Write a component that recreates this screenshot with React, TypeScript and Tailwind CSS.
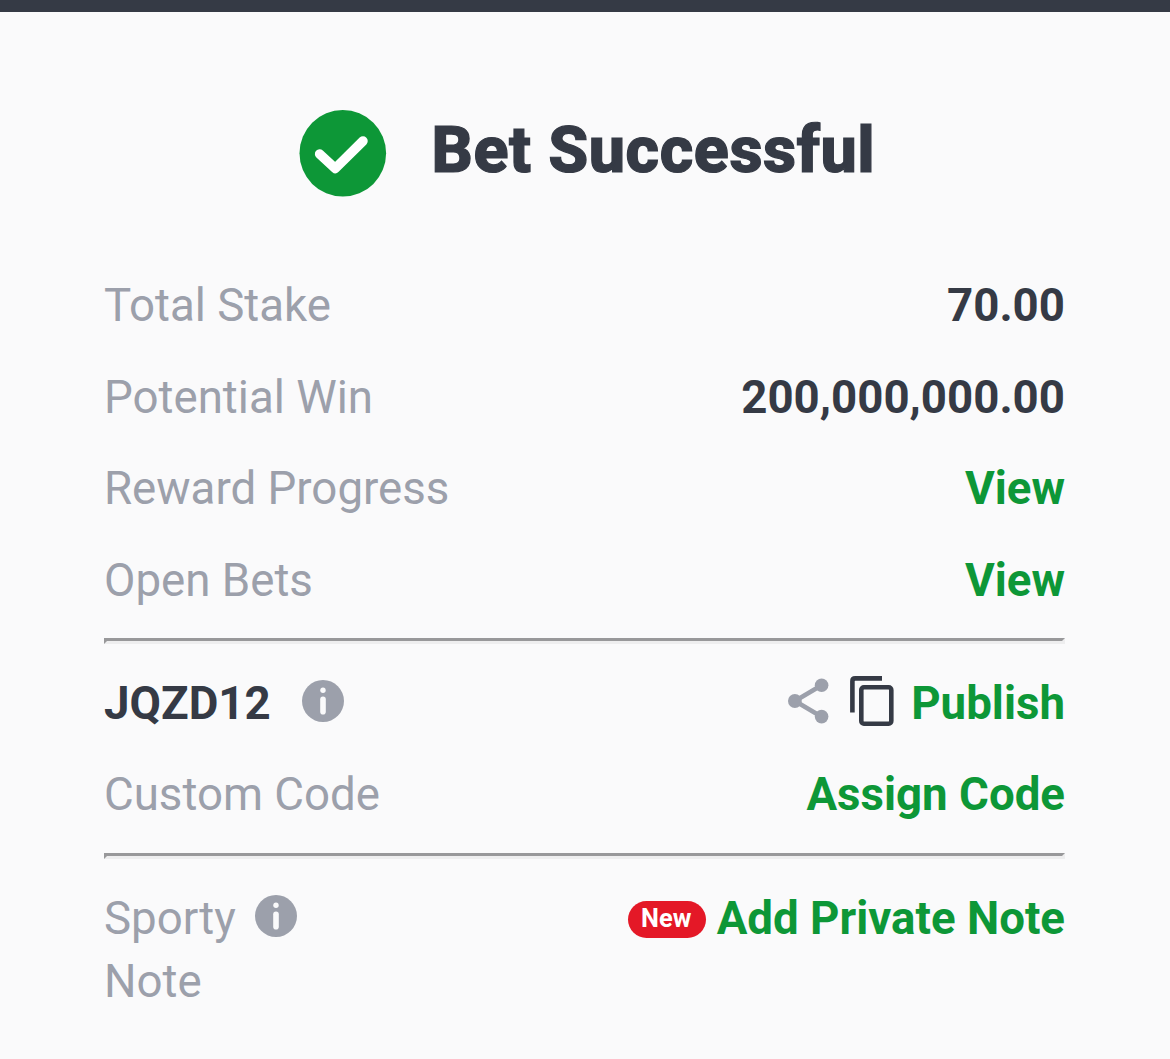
import React from "react";

function Info() {
  return (
    <svg width="42" height="42" viewBox="0 0 42 42" className="mb-[4px] shrink-0">
      <circle cx="21" cy="21" r="21" fill="#9ca0ab" />
      <circle cx="21" cy="10.3" r="2.7" fill="#fafafb" />
      <rect x="18.2" y="16.5" width="5.6" height="18" rx="2.8" fill="#fafafb" />
    </svg>
  );
}

function Share() {
  return (
    <svg width="42" height="46" viewBox="0 0 42 46" className="shrink-0">
      <path d="M34 7L7 23L34 39" fill="none" stroke="#9ca0ab" strokeWidth="4.6" />
      <circle cx="33.6" cy="7.2" r="6.8" fill="#9ca0ab" />
      <circle cx="6.9" cy="23" r="6.9" fill="#9ca0ab" />
      <circle cx="33.6" cy="38.6" r="6.8" fill="#9ca0ab" />
    </svg>
  );
}

function Copy() {
  return (
    <svg width="44" height="51" viewBox="0 0 44 51" className="shrink-0" fill="none" stroke="#353a45" strokeWidth="4.6">
      <path d="M2.4 36.5V5.2Q2.4 2.4 5.2 2.4H32" />
      <rect x="11.3" y="11.3" width="30" height="36.4" rx="2.6" />
    </svg>
  );
}

function Row({ label, children }: { label: string; children: React.ReactNode }) {
  return (
    <div className="flex h-[91.5px] items-center justify-between pt-[1.5px]">
      <span className="text-[#9ca0ab]">{label}</span>
      {children}
    </div>
  );
}

const green = "font-bold text-[#0d9737]";
const dark = "font-bold text-[#353a45]";

function Divider() {
  return <div className="my-[13px] h-[6px] border-[3px] border-t-[#98989a] border-r-[#eeeeef] border-b-[#eeeeef] border-l-[#98989a]" />;
}

export default function App() {
  return (
    <main className="h-[1059px] w-[1170px] overflow-hidden border-t-[12px] border-[#353a45] bg-[#fafafb] pr-[105px] pl-[104px] font-['Roboto',sans-serif] text-[45.65px] leading-[65px]">
      <header className="flex h-[247px] pt-[98px] pl-[195px]">
        <svg width="88" height="88" viewBox="0 0 88 88" className="shrink-0">
          <circle cx="43.8" cy="43.3" r="43.3" fill="#0d9737" />
          <path d="M20.6 44L36.3 58.4L64 31" fill="none" stroke="#fff" strokeWidth="9.5" strokeLinecap="round" strokeLinejoin="round" />
        </svg>
        <h1 className="ml-[44.5px] h-[80px] text-[64.5px] leading-[80px] font-extrabold tracking-[0.55px] whitespace-nowrap text-[#353a45] [-webkit-text-stroke:1.2px_#353a45]">Bet Successful</h1>
      </header>
      <Row label="Total Stake"><span className={dark}>70.00</span></Row>
      <Row label="Potential Win"><span className={dark}>200,000,000.00</span></Row>
      <Row label="Reward Progress"><span className={green}>View</span></Row>
      <Row label="Open Bets"><span className={green}>View</span></Row>
      <Divider />
      <div className="flex h-[91px] items-center justify-between pt-[2px]">
        <div className="flex items-center gap-[31px]"><span className={dark}>JQZD12</span><div className="pb-[2px]"><Info /></div></div>
        <div className="flex items-center">
          <div className="mr-[17px] flex items-center gap-[20px] pb-[5px]"><Share /><Copy /></div>
          <span className={green}>Publish</span>
        </div>
      </div>
      <Row label="Custom Code"><span className={green}>Assign Code</span></Row>
      <Divider />
      <div className="flex items-start justify-between pt-[15px] leading-[63px]">
        <div className="text-[#9ca0ab]">
          <div className="flex items-center gap-[19px]"><span>Sporty</span><Info /></div>
          <div>Note</div>
        </div>
        <div className="flex items-center gap-[11px]">
          <span className="mt-[2px] h-[37px] w-[78px] rounded-full bg-[#e41827] pr-[1px] text-center text-[25.4px] leading-[35px] font-bold text-white">New</span>
          <span className={green}>Add Private Note</span>
        </div>
      </div>
    </main>
  );
}
